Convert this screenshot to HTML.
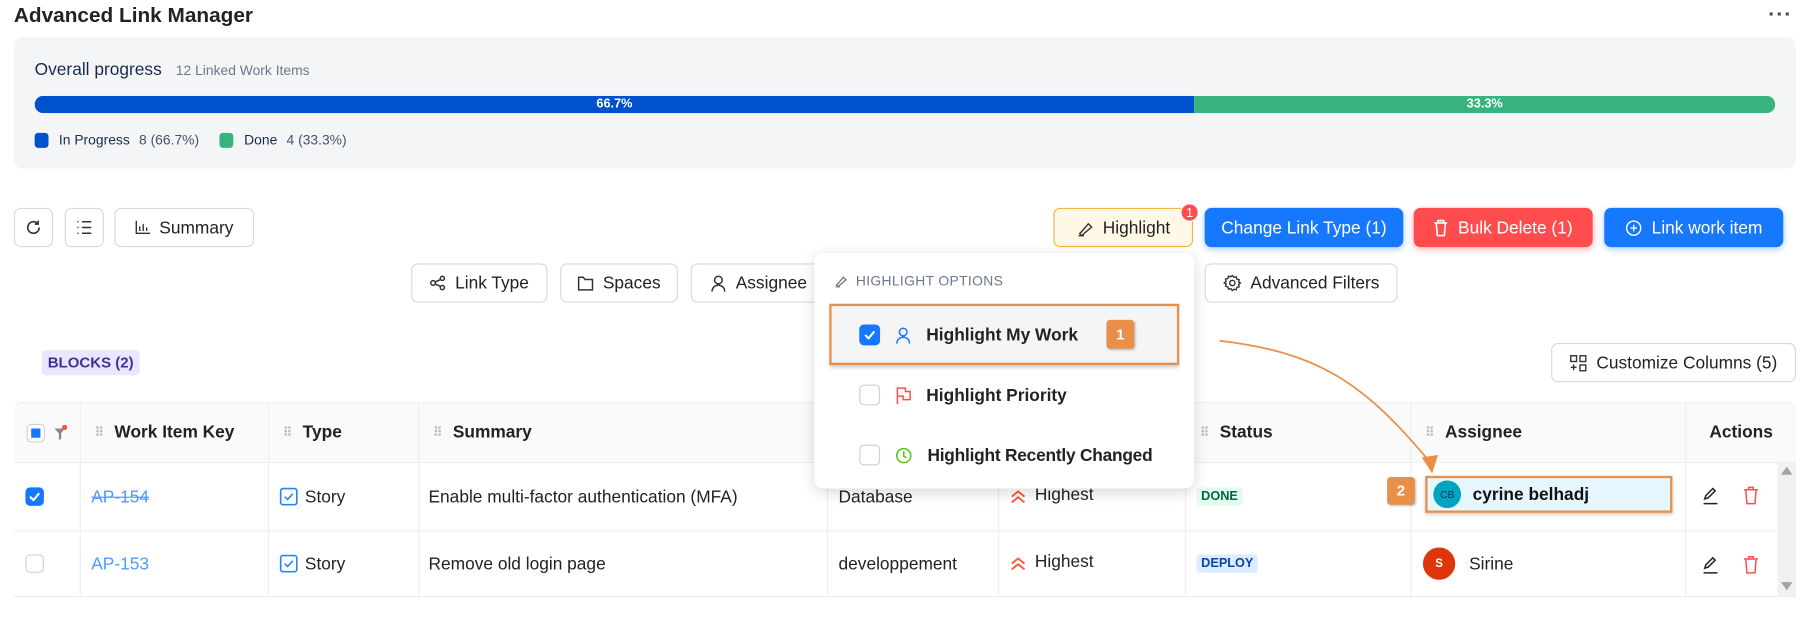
<!DOCTYPE html>
<html><head><meta charset="utf-8"><style>
*{box-sizing:border-box;margin:0;padding:0}
html,body{width:1811px;height:624px;overflow:hidden;background:#fff}
#w{position:absolute;left:0;top:0;width:1568px;height:540px;transform:scale(1.15497);transform-origin:0 0;font-family:"Liberation Sans",sans-serif;color:#172b4d}
.a{position:absolute}
.btn{position:absolute;border:1px solid #d9d9d9;border-radius:6px;background:#fff;display:flex;align-items:center;justify-content:center;gap:8px;font-size:15px;color:#222;height:34px}
.pb{color:#fff;border:none;box-shadow:0 2px 6px rgba(22,119,255,.35)}
.row{position:absolute;left:12px;width:1543px;border-bottom:1px solid #eee}
.cell{position:absolute;top:0;height:100%;display:flex;align-items:center;font-size:15px;color:#222;border-right:1px solid #eee}
.cb{width:16px;height:16px;border:1px solid #d0d0d0;border-radius:4px;background:#fff}
.cbc{background:#1677ff;border-color:#1677ff;display:flex;align-items:center;justify-content:center}
.dots{color:#bbb;font-size:11px;letter-spacing:-1px;margin-right:10px}
.hi{font-weight:bold}
</style></head><body><div id="w">
<div class="a" style="left:12px;top:3px;font-size:18px;font-weight:bold;color:#222">Advanced Link Manager</div>
<div class="a" style="left:1531px;top:2px;font-size:18px;font-weight:bold;color:#444;letter-spacing:1px">···</div>
<div class="a" style="left:12px;top:32px;width:1543px;height:114px;background:#f4f5f7;border-radius:8px"></div>
<div class="a" style="left:30px;top:52px;font-size:15px;color:#172b4d">Overall progress <span style="font-size:12px;color:#6b778c;margin-left:8px">12 Linked Work Items</span></div>
<div class="a" style="left:30px;top:83px;width:1507px;height:15px;border-radius:8px;overflow:hidden;display:flex;font-size:11px;font-weight:bold;color:#fff">
<div style="width:1004px;background:#0052cc;text-align:center;line-height:15px">66.7%</div>
<div style="flex:1;background:#36b37e;text-align:center;line-height:15px">33.3%</div></div>
<div class="a" style="left:30px;top:114px;font-size:12px;color:#42526e;display:flex;align-items:center">
<span style="width:12px;height:13px;background:#0052cc;border-radius:3px;margin-right:9px"></span><span style="color:#172b4d;margin-right:8px">In Progress</span>8 (66.7%)
<span style="width:12px;height:13px;background:#36b37e;border-radius:3px;margin:0 9px 0 18px"></span><span style="color:#172b4d;margin-right:8px">Done</span>4 (33.3%)</div>

<div class="btn" style="left:12px;top:180px;width:34px"><svg width="16" height="16" viewBox="0 0 16 16" fill="none" stroke="#333" stroke-width="1.4"><path d="M13 8a5 5 0 1 1-1.6-3.7M12 2v3h-3"/></svg></div>
<div class="btn" style="left:56px;top:180px;width:34px"><svg width="16" height="16" viewBox="0 0 16 16" stroke="#333" stroke-width="1.3"><path d="M6 3h8M6 8h8M6 13h8M2 3h1M2 8h1M2 13h1"/></svg></div>
<div class="btn" style="left:99px;top:180px;width:121px"><svg width="13" height="12" viewBox="0 0 13 12" fill="none" stroke="#333" stroke-width="1.2"><path d="M1 0v11h12M4 9V5M7 9V3M10 9V6"/></svg>Summary</div>

<div class="btn" style="left:912px;top:180px;width:121px;background:#fff8e6;border-color:#f5b342"><svg width="15" height="15" viewBox="0 0 16 16" fill="none" stroke="#333" stroke-width="1.3"><path d="M3 13l2-2 6-7 3 3-7 6-2 2zM2 15h5"/></svg>Highlight</div>
<div class="a" style="left:1022px;top:176px;width:16px;height:16px;border-radius:50%;background:#ff4d4f;color:#fff;font-size:11px;text-align:center;line-height:16px;border:1px solid #fff">1</div>
<div class="btn pb" style="left:1043px;top:180px;width:172px;background:#1677ff">Change Link Type (1)</div>
<div class="btn pb" style="left:1224px;top:180px;width:155px;background:#ff4d4f;box-shadow:0 2px 6px rgba(255,77,79,.4)"><svg width="13" height="15" viewBox="0 0 13 15" fill="none" stroke="#fff" stroke-width="1.4"><path d="M1 3h11M4 3V1h5v2M2.5 3l1 11h6l1-11"/></svg>Bulk Delete (1)</div>
<div class="btn pb" style="left:1389px;top:180px;width:155px;background:#1677ff"><svg width="15" height="15" viewBox="0 0 16 16" fill="none" stroke="#fff" stroke-width="1.3"><circle cx="8" cy="8" r="6.5"/><path d="M8 5v6M5 8h6"/></svg>Link work item</div>

<div class="btn" style="left:356px;top:228px;width:118px"><svg width="14" height="14" viewBox="0 0 14 14" fill="none" stroke="#333" stroke-width="1.3"><circle cx="3" cy="7" r="2"/><circle cx="11" cy="3" r="1.8"/><circle cx="11" cy="11" r="1.8"/><path d="M5 6l4.5-2M5 8l4.5 2"/></svg>Link Type</div>
<div class="btn" style="left:485px;top:228px;width:102px"><svg width="14" height="13" viewBox="0 0 14 13" fill="none" stroke="#333" stroke-width="1.3"><path d="M1 1h4l1.5 2H13v9H1z"/></svg>Spaces</div>
<div class="btn" style="left:598px;top:228px;width:120px;justify-content:flex-start;padding-left:16px"><svg width="14" height="15" viewBox="0 0 14 15" fill="none" stroke="#333" stroke-width="1.3"><circle cx="7" cy="4.5" r="3.3"/><path d="M1.5 14.5c0-3.5 2.5-5.5 5.5-5.5s5.5 2 5.5 5.5"/></svg>Assignee</div>
<div class="btn" style="left:1043px;top:228px;width:167px"><svg width="16" height="16" viewBox="0 0 16 16" fill="none" stroke="#333" stroke-width="1.2"><circle cx="8" cy="8" r="2.3"/><path d="M8 1.5l1.3 1.6 2-.5.6 2 2 .6-.5 2L15 8l-1.6 1.3.5 2-2 .6-.6 2-2-.5L8 14.5l-1.3-1.6-2 .5-.6-2-2-.6.5-2L1 8l1.6-1.3-.5-2 2-.6.6-2 2 .5z"/></svg>Advanced Filters</div>

<div class="a" style="left:36px;top:303px;width:85px;height:22px;background:#eae6ff;border-radius:4px;color:#403294;font-weight:bold;font-size:13px;text-align:center;line-height:22px">BLOCKS (2)</div>
<div class="btn" style="left:1343px;top:297px;width:212px;height:34px"><svg width="15" height="15" viewBox="0 0 15 15" fill="none" stroke="#333" stroke-width="1.2"><rect x="1" y="1" width="5" height="5"/><rect x="9" y="1" width="5" height="5"/><rect x="9" y="9" width="5" height="5"/><path d="M3.5 8.5v5M1 11h5"/></svg>Customize Columns (5)</div>

<!-- table -->
<div class="row" style="top:348px;height:53px;background:#fafafa;border-top:1px solid #eee;border-radius:8px 8px 0 0;font-weight:bold">
<div class="cell" style="left:0;width:58px;padding-left:11px;gap:8px"><div class="cb" style="display:flex;align-items:center;justify-content:center"><div style="width:8px;height:8px;background:#1677ff"></div></div><svg width="11" height="14" viewBox="0 0 11 14"><path d="M0 3h9L6 7v5L4 13V7z" fill="#888"/><circle cx="9" cy="2" r="2.3" fill="#ff5630"/></svg></div>
<div class="cell hi" style="left:58px;width:163px;padding-left:12px"><span class="dots">⠿</span>Work Item Key</div>
<div class="cell hi" style="left:221px;width:130px;padding-left:12px"><span class="dots">⠿</span>Type</div>
<div class="cell hi" style="left:351px;width:354px;padding-left:12px"><span class="dots">⠿</span>Summary</div>
<div class="cell" style="left:705px;width:148px"></div>
<div class="cell" style="left:853px;width:162px"></div>
<div class="cell hi" style="left:1015px;width:195px;padding-left:12px"><span class="dots">⠿</span>Status</div>
<div class="cell hi" style="left:1210px;width:238px;padding-left:12px"><span class="dots">⠿</span>Assignee</div>
<div class="cell hi" style="left:1448px;width:95px;justify-content:center;border:none">Actions</div>
</div>

<div class="row" style="top:401px;height:59px">
<div class="cell" style="left:0;width:58px;padding-left:10px"><div class="cb cbc"><svg width="10" height="8" viewBox="0 0 10 8" fill="none" stroke="#fff" stroke-width="1.8"><path d="M1 4l3 3 5-6"/></svg></div></div>
<div class="cell" style="left:58px;width:163px;padding-left:9px;color:#4c9aff;text-decoration:line-through">AP-154</div>
<div class="cell" style="left:221px;width:130px;padding-left:9px;gap:6px"><svg width="16" height="16" viewBox="0 0 16 16" fill="none" stroke="#2684ff" stroke-width="1.4"><rect x="1" y="1" width="14" height="14" rx="2"/><path d="M4.5 8l2.5 2.5 4.5-5"/></svg>Story</div>
<div class="cell" style="left:351px;width:354px;padding-left:8px">Enable multi-factor authentication (MFA)</div>
<div class="cell" style="left:705px;width:148px;padding-left:9px">Database</div>
<div class="cell" style="left:853px;width:162px;padding-left:10px;gap:8px;align-items:flex-start;padding-top:19px"><svg style="margin-top:4px" width="13" height="12" viewBox="0 0 13 12" fill="none" stroke="#ff5630" stroke-width="1.6"><path d="M1 6l5.5-4.5L12 6M1 11l5.5-4.5L12 11"/></svg>Highest</div>
<div class="cell" style="left:1015px;width:195px;padding-left:9px"><span style="background:#e3fcef;color:#006644;font-size:11px;font-weight:bold;padding:2px 4px;border-radius:3px">DONE</span></div>
<div class="cell" style="left:1210px;width:238px"></div>
<div class="cell" style="left:1448px;width:80px;gap:20px;padding-left:13px;border:none"></div>
</div>

<div class="row" style="top:460px;height:57px">
<div class="cell" style="left:0;width:58px;padding-left:10px"><div class="cb"></div></div>
<div class="cell" style="left:58px;width:163px;padding-left:9px;color:#4c9aff">AP-153</div>
<div class="cell" style="left:221px;width:130px;padding-left:9px;gap:6px"><svg width="16" height="16" viewBox="0 0 16 16" fill="none" stroke="#2684ff" stroke-width="1.4"><rect x="1" y="1" width="14" height="14" rx="2"/><path d="M4.5 8l2.5 2.5 4.5-5"/></svg>Story</div>
<div class="cell" style="left:351px;width:354px;padding-left:8px">Remove old login page</div>
<div class="cell" style="left:705px;width:148px;padding-left:9px">developpement</div>
<div class="cell" style="left:853px;width:162px;padding-left:10px;gap:8px;align-items:flex-start;padding-top:18px"><svg style="margin-top:4px" width="13" height="12" viewBox="0 0 13 12" fill="none" stroke="#ff5630" stroke-width="1.6"><path d="M1 6l5.5-4.5L12 6M1 11l5.5-4.5L12 11"/></svg>Highest</div>
<div class="cell" style="left:1015px;width:195px;padding-left:9px"><span style="background:#deebff;color:#0747a6;font-size:11px;font-weight:bold;padding:2px 4px;border-radius:3px">DEPLOY</span></div>
<div class="cell" style="left:1210px;width:238px;padding-left:10px;gap:12px"><span style="width:28px;height:28px;border-radius:50%;background:#de350b;color:#fff;font-size:10px;font-weight:bold;display:flex;align-items:center;justify-content:center">S</span>Sirine</div>
<div class="cell" style="left:1448px;width:80px;border:none"></div>
</div>
<!-- action icons -->
<svg class="a" style="left:1473px;top:421px" width="16" height="16" viewBox="0 0 16 16" fill="none" stroke="#222" stroke-width="1.3"><path d="M3 11l1-3 6-6 2 2-6 6zM2 15h12"/></svg>
<svg class="a" style="left:1509px;top:421px" width="14" height="16" viewBox="0 0 14 16" fill="none" stroke="#ff4d4f" stroke-width="1.3"><path d="M1 3h12M5 3V1h4v2M2.5 3l1 12h7l1-12"/></svg>
<svg class="a" style="left:1473px;top:481px" width="16" height="16" viewBox="0 0 16 16" fill="none" stroke="#222" stroke-width="1.3"><path d="M3 11l1-3 6-6 2 2-6 6zM2 15h12"/></svg>
<svg class="a" style="left:1509px;top:481px" width="14" height="16" viewBox="0 0 14 16" fill="none" stroke="#ff4d4f" stroke-width="1.3"><path d="M1 3h12M5 3V1h4v2M2.5 3l1 12h7l1-12"/></svg>
<!-- scrollbar -->
<div class="a" style="left:1539px;top:401px;width:16px;height:115px;background:#f1f1f1"></div>
<div class="a" style="left:1542px;top:404px;width:0;height:0;border:5px solid transparent;border-bottom:7px solid #a3a3a3;border-top:0"></div>
<div class="a" style="left:1542px;top:504px;width:0;height:0;border:5px solid transparent;border-top:7px solid #a3a3a3;border-bottom:0"></div>

<!-- highlighted assignee -->
<div class="a" style="left:1234px;top:412px;width:214px;height:32px;background:#e6f6fe;border:2px solid #e8904a;box-shadow:0 2px 3px rgba(0,0,0,.2);display:flex;align-items:center;padding-left:5px;gap:10px;font-weight:bold;font-size:15px;color:#111"><span style="width:24px;height:24px;border-radius:50%;background:#00a3bf;color:#0b3a55;font-size:9px;display:flex;align-items:center;justify-content:center;font-weight:normal">CB</span>cyrine belhadj</div>
<div class="a" style="left:1201px;top:413px;width:24px;height:24px;background:#e8904a;border-radius:3px;color:#fff;font-weight:bold;font-size:13px;text-align:center;line-height:24px;box-shadow:1px 1px 2px rgba(0,0,0,.25)">2</div>

<!-- dropdown -->
<div class="a" style="left:705px;top:219px;width:329px;height:204px;background:#fff;border-radius:8px;box-shadow:0 3px 12px rgba(0,0,0,.15)"></div>
<div class="a" style="left:722px;top:236px;font-size:12px;color:#6b778c;letter-spacing:.3px;display:flex;gap:7px;align-items:center"><svg width="12" height="12" viewBox="0 0 16 16" fill="none" stroke="#6b778c" stroke-width="1.5"><path d="M3 13l2-2 6-7 3 3-7 6-2 2zM2 15h5"/></svg>HIGHLIGHT OPTIONS</div>
<div class="a" style="left:718px;top:263px;width:303px;height:53px;background:#f5f5f5;border:2px solid #e8904a;box-shadow:0 2px 3px rgba(0,0,0,.2)"></div>
<div class="a" style="left:744px;top:281px;display:flex;align-items:center;font-size:15px;color:#222;font-weight:bold"><div class="cb cbc" style="width:18px;height:18px"><svg width="10" height="8" viewBox="0 0 10 8" fill="none" stroke="#fff" stroke-width="1.8"><path d="M1 4l3 3 5-6"/></svg></div><svg style="margin:0 13px 0 13px" width="14" height="15" viewBox="0 0 14 15" fill="none" stroke="#1677ff" stroke-width="1.3"><circle cx="7" cy="4.5" r="3.3"/><path d="M1.5 14.5c0-3.5 2.5-5.5 5.5-5.5s5.5 2 5.5 5.5"/></svg>Highlight My Work</div>
<div class="a" style="left:958px;top:277px;width:24px;height:25px;background:#e8904a;border-radius:3px;color:#fff;font-weight:bold;font-size:13px;text-align:center;line-height:25px;box-shadow:1px 1px 2px rgba(0,0,0,.25)">1</div>
<div class="a" style="left:744px;top:333px;display:flex;align-items:center;font-size:15px;color:#222;font-weight:bold"><div class="cb" style="width:18px;height:18px"></div><svg style="margin:0 13px" width="14" height="15" viewBox="0 0 14 15" fill="none" stroke="#ff4d4f" stroke-width="1.3"><path d="M2 15V1h7v3h4v7H7V8H2"/></svg>Highlight Priority</div>
<div class="a" style="left:744px;top:385px;display:flex;align-items:center;font-size:15px;color:#222;font-weight:bold;letter-spacing:-.2px"><div class="cb" style="width:18px;height:18px"></div><svg style="margin:0 13px" width="15" height="15" viewBox="0 0 16 16" fill="none" stroke="#52c41a" stroke-width="1.4"><circle cx="8" cy="8" r="6.5"/><path d="M8 4v4.5l2.5 1.5"/></svg>Highlight Recently Changed</div>

<!-- arrow -->
<svg class="a" style="left:0;top:0" width="1568" height="540"><path d="M1056 295 C1140 305 1180 330 1238 400" fill="none" stroke="#e8904a" stroke-width="1.5"/><path d="M1231 396 L1240 410 L1245 394 Z" fill="#e8904a"/></svg>
</div></body></html>
